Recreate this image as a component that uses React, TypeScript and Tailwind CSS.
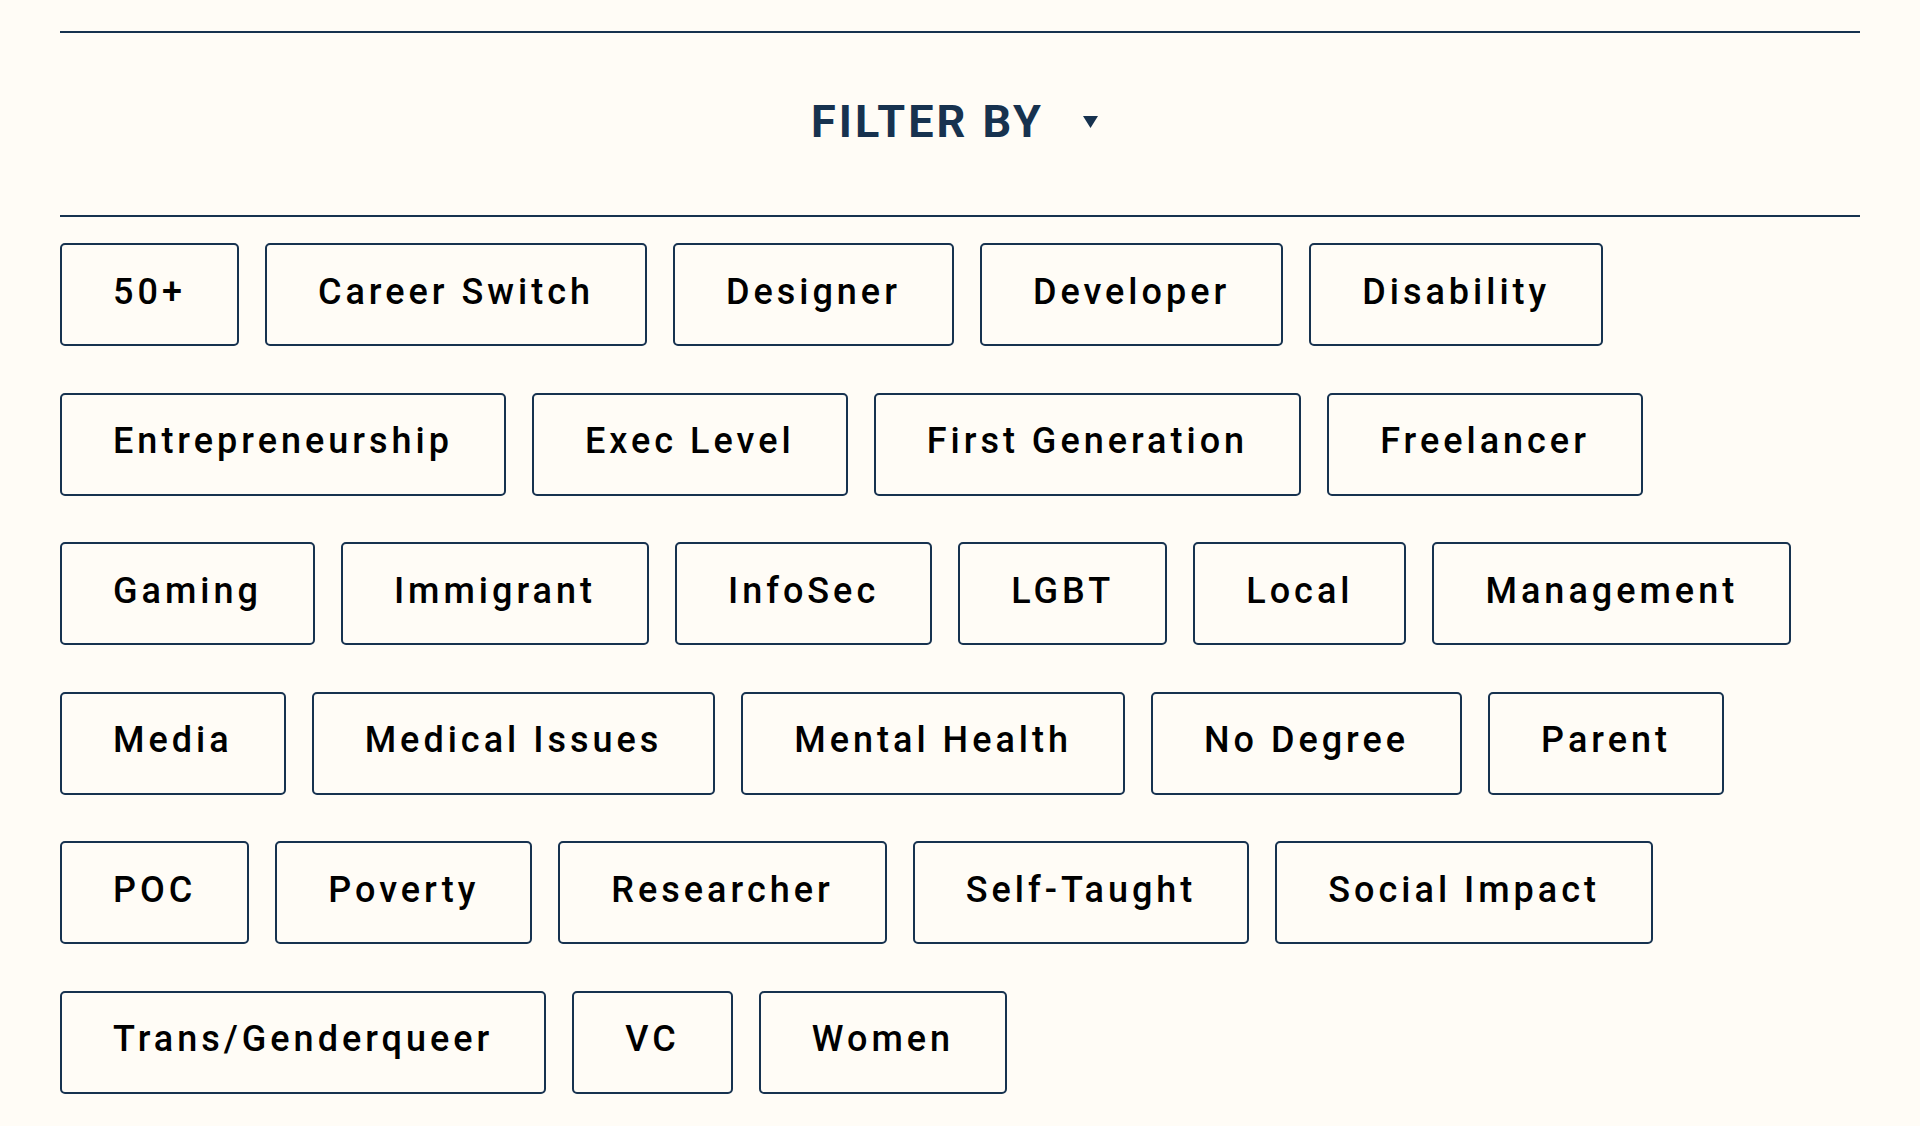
import React from "react";

const rows: string[] = [
  "50+",
  "Career Switch",
  "Designer",
  "Developer",
  "Disability",
  "Entrepreneurship",
  "Exec Level",
  "First Generation",
  "Freelancer",
  "Gaming",
  "Immigrant",
  "InfoSec",
  "LGBT",
  "Local",
  "Management",
  "Media",
  "Medical Issues",
  "Mental Health",
  "No Degree",
  "Parent",
  "POC",
  "Poverty",
  "Researcher",
  "Self-Taught",
  "Social Impact",
  "Trans/Genderqueer",
  "VC",
  "Women",
];

export default function App() {
  return (
    <div className="min-h-screen w-full bg-[#fffcf6] font-['Roboto',sans-serif]">
      <div className="mx-[60px] pt-[31px]">
        <div className="flex h-[186px] items-center justify-center border-y-2 border-[#17324f] pb-[5px] pr-[11px]">
          <span className="text-[45px] font-bold leading-none tracking-[3px] text-[#17324f]">
            FILTER BY
          </span>
          <svg
            className="ml-[39px] mt-[1px]"
            width="15"
            height="12"
            viewBox="0 0 15 12"
            aria-hidden="true"
          >
            <polygon points="0,0 15,0 7.5,12" fill="#17324f" />
          </svg>
        </div>
        <div className="flex flex-wrap gap-x-[26px] gap-y-[46.5px] pt-[26px]">
          {rows.map((label) => (
            <button
              key={label}
              type="button"
              className="flex h-[103px] items-center rounded-[5px] border-2 border-[#17324f] bg-transparent px-[51px] pb-[6px] text-[36px] font-medium leading-none tracking-[4px] text-black"
            >
              {label}
            </button>
          ))}
        </div>
      </div>
    </div>
  );
}
